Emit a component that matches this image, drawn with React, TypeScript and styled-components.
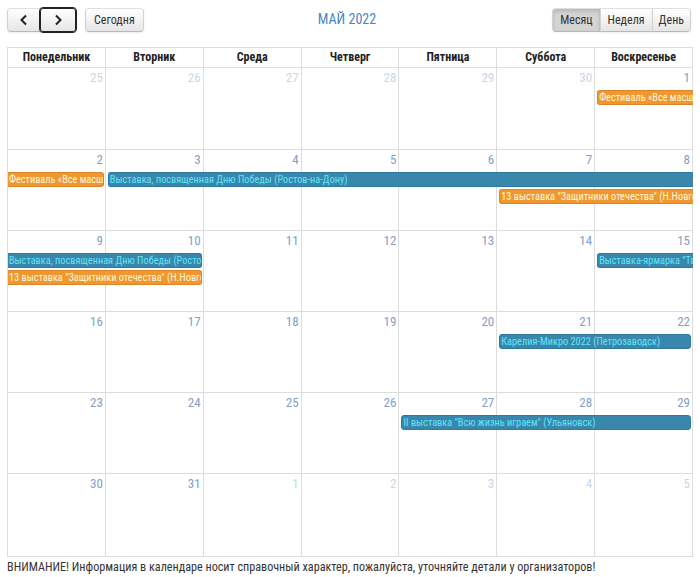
import * as React from "react";
import styled, { createGlobalStyle, css } from "styled-components";

const GlobalStyle = createGlobalStyle`
  * { box-sizing: border-box; }
  body {
    margin: 0;
    background: #fff;
    font-family: "Roboto Condensed", "Liberation Sans Narrow", "DejaVu Sans Condensed", Roboto, sans-serif;
    color: #333;
  }
`;

const SPage = styled.div`
  width: 700px;
  padding: 8px 8px 0 7px;
`;

const SToolbar = styled.div`
  display: flex;
  align-items: center;
  height: 24px;
  margin-bottom: 15px;
`;

const SGroup = styled.div`
  display: flex;
  flex: 1;
  align-items: center;
  gap: 9px;
`;

const SRightGroup = styled(SGroup)`
  justify-content: flex-end;
  gap: 0;
  padding-right: 1px;
`;

const SButton = styled.button<{
  $active?: boolean;
  $focus?: boolean;
  $pos?: "left" | "right" | "mid";
  $pad?: number;
}>`
  height: 24px;
  padding: 0 ${(p) => p.$pad ?? 8}px;
  font-family: inherit;
  font-size: 12px;
  color: #333;
  border: 1px solid #ccc;
  border-color: #e0e0e0 #d2d2d2 #b8b8b8;
  border-radius: 4px;
  background: linear-gradient(#fff, #e6e6e6);
  box-shadow: inset 0 1px 0 rgba(255, 255, 255, 0.2), 0 1px 2px rgba(0, 0, 0, 0.08);
  display: flex;
  align-items: center;
  justify-content: center;
  cursor: pointer;
  ${(p) =>
    p.$pos === "left" &&
    css`
      border-top-right-radius: 0;
      border-bottom-right-radius: 0;
    `}
  ${(p) =>
    p.$pos === "right" &&
    css`
      border-top-left-radius: 0;
      border-bottom-left-radius: 0;
      margin-left: -1px;
    `}
  ${(p) =>
    p.$pos === "mid" &&
    css`
      border-radius: 0;
      margin-left: -1px;
    `}
  ${(p) =>
    p.$active &&
    css`
      background: #d4d4d4;
      box-shadow: inset 0 2px 4px rgba(0, 0, 0, 0.15), 0 1px 2px rgba(0, 0, 0, 0.05);
    `}
  ${(p) =>
    p.$focus &&
    css`
      border: 1px solid #222;
      border-radius: 3px;
      outline: 1px solid #222;
      z-index: 1;
      position: relative;
    `}
`;

const SNav = styled.div`
  display: flex;
`;

const STitle = styled.h2`
  margin: 0;
  font-size: 14px;
  font-weight: 400;
  color: #4a86c5;
  text-transform: uppercase;
  padding: 0 4px 2px 0;
`;

const SCalendar = styled.div`
  width: 686px;
`;

const SHeadRow = styled.div`
  display: grid;
  grid-template-columns: repeat(7, 1fr);
  border-top: 1px solid #ddd;
  border-left: 1px solid #ddd;
  border-bottom: 1px solid #ddd;
`;

const SHeadCell = styled.div`
  height: 19px;
  line-height: 19px;
  text-align: center;
  font-size: 12px;
  font-weight: 700;
  color: #222;
  border-right: 1px solid #ddd;
`;

const SWeek = styled.div<{ $height: number }>`
  display: grid;
  grid-template-columns: repeat(7, 1fr);
  grid-template-rows: 21px 17px 17px 1fr;
  height: ${(p) => p.$height}px;
  border-left: 1px solid #ddd;
  border-bottom: 1px solid #ddd;
`;

const SDayBg = styled.div<{ $col: number }>`
  grid-column: ${(p) => p.$col};
  grid-row: 1 / -1;
  border-right: 1px solid #ddd;
`;

const SDayNum = styled.div<{ $col: number; $other?: boolean }>`
  grid-column: ${(p) => p.$col};
  grid-row: 1;
  text-align: right;
  padding: 2px 3px 0 0;
  font-size: 13px;
  line-height: 16px;
  color: ${(p) => (p.$other ? "#c9d7e6" : "#83a0c4")};
`;

const SEvent = styled.div<{
  $col: number;
  $span: number;
  $lane: number;
  $tone: "blue" | "orange";
  $start: boolean;
  $end: boolean;
}>`
  grid-column: ${(p) => p.$col} / span ${(p) => p.$span};
  grid-row: ${(p) => p.$lane + 1};
  align-self: start;
  z-index: 1;
  margin-top: 1px;
  margin-left: ${(p) => (p.$start ? "2px" : "0")};
  margin-right: ${(p) => (p.$end ? "2px" : "0")};
  height: 15px;
  padding-left: 1px;
  font-size: 10.3px;
  line-height: 13px;
  white-space: nowrap;
  overflow: hidden;
  border: 1px solid;
  border-left-width: ${(p) => (p.$start ? "1px" : "0")};
  border-right-width: ${(p) => (p.$end ? "1px" : "0")};
  border-radius: ${(p) =>
    `${p.$start ? 3 : 0}px ${p.$end ? 3 : 0}px ${p.$end ? 3 : 0}px ${p.$start ? 3 : 0}px`};
  ${(p) =>
    p.$tone === "blue"
      ? css`
          background: #3a87ad;
          border-color: #2f7aa0;
          color: #5fe4f7;
        `
      : css`
          background: #f0982f;
          border-color: #d9862a;
          color: #fff7dc;
        `}
`;

const SNote = styled.p`
  margin: 3px 0 0;
  font-size: 12.15px;
  color: #333;
`;

const Chevron: React.FC<{ dir: "left" | "right" }> = ({ dir }) => (
  <svg width="10" height="12" viewBox="0 0 10 12">
    <path
      d={dir === "left" ? "M7 1.5 L2.5 6 L7 10.5" : "M3 1.5 L7.5 6 L3 10.5"}
      fill="none"
      stroke="#222"
      strokeWidth="2"
    />
  </svg>
);

type Ev = {
  title: string;
  col: number;
  span: number;
  lane: number;
  tone: "blue" | "orange";
  start: boolean;
  end: boolean;
};

type Week = { days: { n: number; other?: boolean }[]; events: Ev[]; height: number };

const dayNames = ["Понедельник", "Вторник", "Среда", "Четверг", "Пятница", "Суббота", "Воскресенье"];

const range = (from: number, to: number, other = false) =>
  Array.from({ length: to - from + 1 }, (_, i) => ({ n: from + i, other }));

const weeks: Week[] = [
  {
    days: [...range(25, 30, true), ...range(1, 1)],
    height: 82,
    events: [
      { title: "Фестиваль «Все масштабы»", col: 7, span: 1, lane: 1, tone: "orange", start: true, end: false },
    ],
  },
  {
    days: range(2, 8),
    height: 81,
    events: [
      { title: "Фестиваль «Все масштабы»", col: 1, span: 1, lane: 1, tone: "orange", start: false, end: true },
      {
        title: "Выставка, посвященная Дню Победы (Ростов-на-Дону)",
        col: 2,
        span: 6,
        lane: 1,
        tone: "blue",
        start: true,
        end: false,
      },
      {
        title: "13 выставка \"Защитники отечества\" (Н.Новгород)",
        col: 6,
        span: 2,
        lane: 2,
        tone: "orange",
        start: true,
        end: false,
      },
    ],
  },
  {
    days: range(9, 15),
    height: 81,
    events: [
      {
        title: "Выставка, посвященная Дню Победы (Ростов-на-Дону)",
        col: 1,
        span: 2,
        lane: 1,
        tone: "blue",
        start: false,
        end: true,
      },
      {
        title: "13 выставка \"Защитники отечества\" (Н.Новгород)",
        col: 1,
        span: 2,
        lane: 2,
        tone: "orange",
        start: false,
        end: true,
      },
      { title: "Выставка-ярмарка \"Тверь\"", col: 7, span: 1, lane: 1, tone: "blue", start: true, end: false },
    ],
  },
  {
    days: range(16, 22),
    height: 81,
    events: [
      {
        title: "Карелия-Микро 2022 (Петрозаводск)",
        col: 6,
        span: 2,
        lane: 1,
        tone: "blue",
        start: true,
        end: true,
      },
    ],
  },
  {
    days: range(23, 29),
    height: 81,
    events: [
      {
        title: "II выставка \"Всю жизнь играем\" (Ульяновск)",
        col: 5,
        span: 3,
        lane: 1,
        tone: "blue",
        start: true,
        end: true,
      },
    ],
  },
  {
    days: [...range(30, 31), ...range(1, 5, true)],
    height: 83,
    events: [],
  },
];

export default function App() {
  return (
    <>
      <GlobalStyle />
      <SPage>
        <SToolbar>
          <SGroup>
            <SNav>
              <SButton $pos="left" style={{ width: 34 }}>
                <Chevron dir="left" />
              </SButton>
              <SButton $pos="right" $focus style={{ width: 36 }}>
                <Chevron dir="right" />
              </SButton>
            </SNav>
            <SButton>Сегодня</SButton>
          </SGroup>
          <STitle>Май 2022</STitle>
          <SRightGroup>
            <SButton $pos="left" $active $pad={7}>
              Месяц
            </SButton>
            <SButton $pos="mid" $pad={7}>
              Неделя
            </SButton>
            <SButton $pos="right" $pad={6}>
              День
            </SButton>
          </SRightGroup>
        </SToolbar>
        <SCalendar>
          <SHeadRow>
            {dayNames.map((d) => (
              <SHeadCell key={d}>{d}</SHeadCell>
            ))}
          </SHeadRow>
          {weeks.map((w, wi) => (
            <SWeek key={wi} $height={w.height}>
              {w.days.map((d, i) => (
                <SDayBg key={`bg${i}`} $col={i + 1} />
              ))}
              {w.days.map((d, i) => (
                <SDayNum key={`n${i}`} $col={i + 1} $other={d.other}>
                  {d.n}
                </SDayNum>
              ))}
              {w.events.map((e, ei) => (
                <SEvent
                  key={`e${ei}`}
                  $col={e.col}
                  $span={e.span}
                  $lane={e.lane}
                  $tone={e.tone}
                  $start={e.start}
                  $end={e.end}
                >
                  {e.title}
                </SEvent>
              ))}
            </SWeek>
          ))}
        </SCalendar>
        <SNote>
          ВНИМАНИЕ! Информация в календаре носит справочный характер, пожалуйста, уточняйте детали у
          организаторов!
        </SNote>
      </SPage>
    </>
  );
}
